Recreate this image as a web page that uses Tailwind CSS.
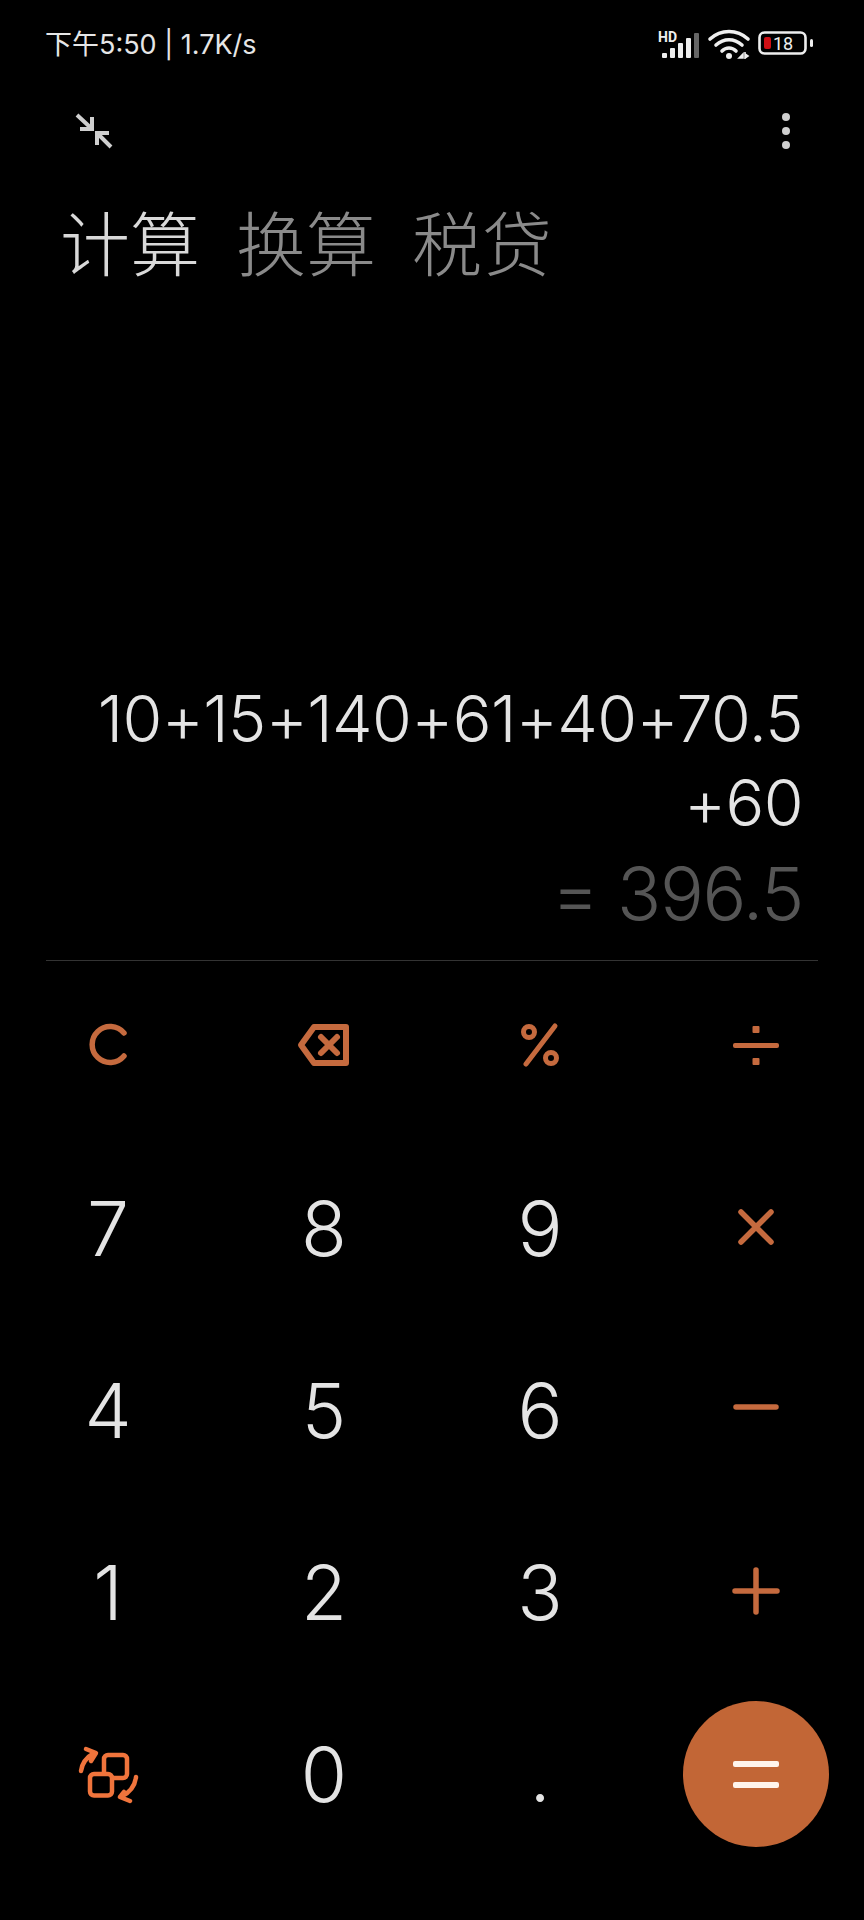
<!DOCTYPE html>
<html lang="zh"><head><meta charset="utf-8"><script src="https://cdn.jsdelivr.net/npm/@tailwindcss/browser@4"></script></head>
<body class="bg-black">
<div class="w-[864px] h-[1920px] bg-black flex flex-col font-['Inter','Noto_Sans_CJK_SC',sans-serif] overflow-hidden">
  <!-- status bar -->
  <div class="h-[88px] shrink-0 flex items-center justify-between pl-[45px] pr-[40px] text-[#e6e6e6]">
    <span class="text-[27px] leading-none">下午5:50 | 1.7K/s</span>
    <svg width="166" height="32" viewBox="0 0 166 32" class="block mt-[2px]">
      <text x="0" y="13" font-size="14" font-weight="700" fill="#eee" font-family="Roboto">HD</text>
      <g fill="#eee"><rect x="4" y="24" width="5" height="5" rx="1"/><rect x="12" y="19" width="5" height="10" rx="1"/><rect x="20" y="14" width="5" height="15" rx="1"/><rect x="28" y="9" width="5" height="20" rx="1"/></g>
      <rect x="36" y="4" width="5" height="25" rx="1" fill="#666"/>
      <g fill="none" stroke="#eee" stroke-width="3.600" stroke-linecap="round"><path d="M52 10C63 0 79 0 90 10"/><path d="M58 16C66 9 76 9 84 16"/><path d="M64 22C68 18 74 18 78 22"/></g>
      <circle cx="71" cy="27" r="3" fill="#eee"/>
      <path d="M81 29l4-4v4zM87 23v7M87 25l3 2-3 2" stroke="#eee" stroke-width="1.600" fill="#eee"/>
      <rect x="101.500" y="3.500" width="46" height="21" rx="5" fill="none" stroke="#eee" stroke-width="2.600"/>
      <rect x="106" y="8" width="7" height="12" rx="2" fill="#d00f14"/>
      <text x="115" y="20.500" font-size="18" font-weight="400" fill="#eee" font-family="Roboto">18</text>
      <rect x="152" y="10" width="3" height="8" rx="1.500" fill="#eee"/>
    </svg>
  </div>
  <!-- toolbar -->
  <div class="h-[48px] mt-[19px] shrink-0 flex items-center justify-between pl-[70px] pr-[73px]">
    <svg width="48" height="48" viewBox="0 0 48 48" fill="none" stroke="#cfcfcf" stroke-width="4">
      <path d="M7 8 21 21M22 10V22H10"/><path d="M41 40 28 27M27 38V26H39"/>
    </svg>
    <svg width="10" height="38" viewBox="0 0 10 38" fill="#cfcfcf"><circle cx="5" cy="5" r="4"/><circle cx="5" cy="19" r="4"/><circle cx="5" cy="33" r="4"/></svg>
  </div>
  <!-- tabs -->
  <div class="flex gap-[36px] pl-[60px] mt-[46px] text-[70px] leading-[80px] font-extralight text-[#8a8a8a] font-['Noto_Sans_CJK_SC',sans-serif]">
    <span class="text-[#d9d9d9]">计算</span><span>换算</span><span>税贷</span>
  </div>
  <div class="flex-1"></div>
  <!-- display -->
  <div class="pr-[61px] text-right font-light">
    <div class="text-[64.5px] leading-[84.500px] tracking-[-0.6px] text-[#e4e4e4]">10+15+140+61+40+70.5<br>+60</div>
    <div class="text-[73px] leading-[92px] tracking-[-1.3px] text-[#555555] mt-[2.5px]">= 396.5</div>
  </div>
  <div class="h-px bg-[#333333] mx-[46px] mt-[20px]"></div>
  <!-- keypad -->
  <div class="grid grid-cols-4 auto-rows-[168px] gap-y-[14px] mb-[63px] text-[75px] font-light text-[#e4e4e4] leading-none [&>div]:flex [&>div]:items-center [&>div]:justify-center">
    <div>
      <svg width="48" height="48" viewBox="0 0 48 48" fill="none" stroke="#c56a3e" stroke-width="5.500" stroke-linecap="round"><path d="M40 12A18 18 0 1 0 40 35"/></svg>
    </div>
    <div>
      <svg width="56" height="48" viewBox="0 0 56 48" fill="none" stroke="#c56a3e" stroke-width="6" stroke-linecap="round" stroke-linejoin="round"><path d="M5 24 18 6H50V42H18ZM25 16 41 32M41 16 25 32"/></svg>
    </div>
    <div>
      <svg width="48" height="48" viewBox="0 0 48 48" fill="none" stroke="#c56a3e" stroke-width="5" stroke-linecap="round"><circle cx="13" cy="11" r="5.500"/><circle cx="35" cy="37" r="5.500"/><path d="M39 5 10 43"/></svg>
    </div>
    <div>
      <svg width="48" height="48" viewBox="0 0 48 48" fill="#c56a3e"><rect x="1" y="22" width="46" height="5" rx="2"/><rect x="20.500" y="5" width="7" height="7" rx="1"/><rect x="20.500" y="37" width="7" height="7" rx="1"/></svg>
    </div>
    <div class="pt-[3px]">7</div><div class="pt-[3px]">8</div><div class="pt-[3px]">9</div>
    <div><svg width="48" height="48" viewBox="0 0 48 48" fill="none" stroke="#c56a3e" stroke-width="5.500" stroke-linecap="round"><path d="M9 9 39 39M39 9 9 39"/></svg></div>
    <div class="pt-[3px]">4</div><div class="pt-[3px]">5</div><div class="pt-[3px]">6</div>
    <div><svg width="48" height="48" viewBox="0 0 48 48" fill="none" stroke="#c56a3e" stroke-width="5.500" stroke-linecap="round"><path d="M4 22H44"/></svg></div>
    <div class="pt-[3px]">1</div><div class="pt-[3px]">2</div><div class="pt-[3px]">3</div>
    <div><svg width="48" height="48" viewBox="0 0 48 48" fill="none" stroke="#c56a3e" stroke-width="5.500" stroke-linecap="round"><path d="M3 24H45M24 3V45"/></svg></div>
    <div>
      <svg width="64" height="64" viewBox="0 0 64 64" fill="none" stroke="#f0743c" stroke-width="4.500" stroke-linecap="round" stroke-linejoin="round"><rect x="28" y="14" width="23" height="23" rx="4"/><rect x="14" y="33" width="22" height="21.500" rx="4" fill="#000"/><path d="M5 30C6 22 11 16 18 12M10 8 20 12 15 20"/><path d="M60 36C59 45 53 52 45 56M54 60 44 56 48 51"/></svg>
    </div>
    <div class="pt-[3px]">0</div><div class="pt-[3px]">.</div>
    <div>
      <div class="w-[146px] h-[146px] rounded-full bg-[#c26636] translate-y-[1px] flex flex-col items-center justify-center gap-[15px]">
        <div class="w-[46px] h-[6px] rounded-[2px] bg-[#fff4ec]"></div>
        <div class="w-[46px] h-[6px] rounded-[2px] bg-[#fff4ec]"></div>
      </div>
    </div>
  </div>
</div>
</body></html>
